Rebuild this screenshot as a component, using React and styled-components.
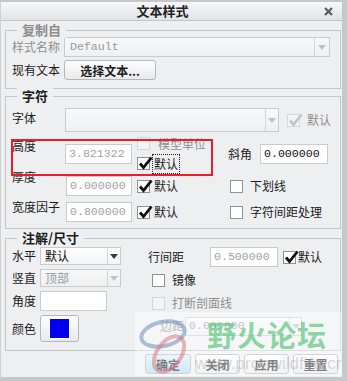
import React from "react";
import styled, { createGlobalStyle } from "styled-components";

const cjk = `"Noto Sans CJK SC", "Noto Sans", sans-serif`;
const mono = `"Liberation Mono", "DejaVu Sans Mono", monospace`;

const GlobalStyle = createGlobalStyle`
  body {
    margin: 0;
    background: #c6c7c9;
  }
  * {
    box-sizing: border-box;
  }
`;

const Window = styled.div`
  position: relative;
  width: 347px;
  height: 381px;
  display: flex;
  flex-direction: column;
  overflow: hidden;
  background: #eeeff1;
  border-top: 2px solid #c6c7c9;
  border-left: 1px solid #cfd0d2;
  border-right: 5px solid #c6c7c9;
  border-bottom: 4px solid #c6c7c9;
  font-family: ${cjk};
  font-size: 12px;
  line-height: 16px;
  color: #1c1c1c;
`;

const TitleBar = styled.div`
  flex: none;
  height: 19px;
  display: flex;
  align-items: center;
  background: linear-gradient(#f7f7f7, #e2e3e5);
  border-bottom: 1px solid #c3c4c6;
`;

const Title = styled.div`
  flex: 1;
  text-align: center;
  font-weight: bold;
  font-size: 13px;
  color: #222;
`;

const CloseBox = styled.div`
  width: 18px;
  display: flex;
  align-items: center;
  justify-content: flex-start;
`;

const Body = styled.div`
  flex: 1;
  display: flex;
  flex-direction: column;
  padding: 9px 1px 0 4px;
`;

const Group = styled.div`
  position: relative;
  border: 1px solid #c4c6c9;
  margin-top: ${(p) => p.$mt || 0}px;
  padding: ${(p) => p.$pad};
  display: flex;
  flex-direction: ${(p) => (p.$row ? "row" : "column")};
  gap: ${(p) => p.$gap || 0}px;
`;

const Legend = styled.span`
  position: absolute;
  top: -9px;
  left: 11px;
  padding: 0 5px;
  background: #eeeff1;
  font-weight: bold;
  font-size: 13px;
  line-height: 16px;
  color: ${(p) => (p.$disabled ? "#8e8e8e" : "#1c1c1c")};
`;

const Row = styled.div`
  display: flex;
  align-items: center;
  height: ${(p) => p.$h || 20}px;
`;

const Col = styled.div`
  display: flex;
  flex-direction: column;
  gap: ${(p) => p.$gap || 0}px;
  width: ${(p) => (p.$w ? `${p.$w}px` : "auto")};
  margin-left: ${(p) => p.$ml || 0}px;
  flex: none;
`;

const Label = styled.span`
  flex: none;
  width: ${(p) => (p.$w ? `${p.$w}px` : "auto")};
  white-space: nowrap;
  align-self: ${(p) => (p.$top ? "flex-start" : "center")};
  margin-top: ${(p) => p.$dy || 0}px;
  margin-left: ${(p) => p.$ml || 0}px;
  color: ${(p) => (p.$disabled ? "#8e8e8e" : "#1c1c1c")};
`;

const TextBox = styled.div`
  flex: none;
  width: ${(p) => p.$w}px;
  height: ${(p) => p.$h || 20}px;
  display: flex;
  align-items: center;
  padding-left: 3px;
  overflow: hidden;
  white-space: nowrap;
  background: ${(p) => (p.$off ? "#f4f5f6" : "#ffffff")};
  border: 1px solid #c9cbcf;
  font-family: ${mono};
  font-size: 11.6px;
  color: ${(p) => (p.$dim ? "#a2a2a2" : "#111")};
`;

const Select = styled.div`
  flex: none;
  width: ${(p) => p.$w}px;
  height: ${(p) => p.$h || 20}px;
  display: flex;
  align-items: stretch;
  border: 1px solid #c9cbcf;
  background: ${(p) =>
    p.$off ? "linear-gradient(#f8f8f9, #eef0f1)" : "linear-gradient(#ffffff, #f3f4f5)"};
  color: ${(p) => (p.$off ? "#9a9a9a" : "#111")};
`;

const SelectText = styled.div`
  flex: 1;
  display: flex;
  align-items: center;
  padding-left: ${(p) => p.$pl || 5}px;
  font-family: ${(p) => (p.$mono ? mono : cjk)};
  font-size: ${(p) => (p.$mono ? "11.6px" : "12px")};
  white-space: nowrap;
  overflow: hidden;
`;

const ArrowCell = styled.div`
  flex: none;
  width: ${(p) => p.$w || 13}px;
  display: flex;
  align-items: center;
  justify-content: center;
  border-left: 1px solid #d3d5d8;
  &::after {
    content: "";
    border-left: 4px solid transparent;
    border-right: 4px solid transparent;
    border-top: 5px solid ${(p) => (p.$off ? "#bfc1c4" : "#3a3a3a")};
  }
`;

const Button = styled.button`
  flex: none;
  width: ${(p) => p.$w}px;
  height: ${(p) => p.$h || 20}px;
  padding: 0;
  display: flex;
  align-items: center;
  justify-content: center;
  border: 1px solid #b3b6ba;
  border-radius: 3px;
  background: ${(p) =>
    p.$primary ? "linear-gradient(#d9effc, #acd8f6)" : "linear-gradient(#fefefe, #e8e9eb)"};
  font-family: ${cjk};
  font-size: 12px;
  font-weight: bold;
  color: #1c1c1c;
`;

const Swatch = styled.span`
  width: 19px;
  height: 19px;
  background: #0000f0;
  outline: 1px solid #ffffff;
`;

const CheckItem = styled.div`
  display: flex;
  align-items: center;
  gap: ${(p) => p.$gap || 4}px;
  margin-left: ${(p) => p.$ml || 0}px;
  color: ${(p) => (p.$disabled ? "#8e8e8e" : "#1c1c1c")};
  white-space: nowrap;
`;

const Box = styled.span`
  position: relative;
  flex: none;
  width: 13px;
  height: 13px;
  border: 1px solid ${(p) => (p.$disabled ? "#d5d7da" : "#8f9194")};
  background: ${(p) => (p.$disabled ? "#f3f4f5" : "#ffffff")};
  svg {
    position: absolute;
    left: 0px;
    top: -3px;
  }
`;

const Focus = styled.span`
  outline: 1px dotted #222;
  padding: 1px 1px;
`;

const Annotation = styled.div`
  position: absolute;
  left: 5px;
  top: 42px;
  width: 202px;
  height: 37px;
  border: 2px solid #ee1c25;
  pointer-events: none;
`;

const ButtonBar = styled.div`
  display: flex;
  justify-content: flex-end;
  gap: 4px;
  margin-top: 3px;
  padding-right: 3px;
`;

const Watermark = styled.div`
  position: absolute;
  left: 134px;
  top: 310px;
  width: 213px;
  height: 64px;
  background: rgba(255, 255, 255, 0.42);
  pointer-events: none;
`;

const MarkLogo = styled.svg`
  position: absolute;
  left: 2px;
  top: 2px;
`;

const MarkTitle = styled.div`
  position: absolute;
  left: 72px;
  top: 5px;
  font-family: ${cjk};
  font-weight: bold;
  font-size: 29px;
  line-height: 34px;
  letter-spacing: 1px;
  color: rgba(70, 190, 110, 0.6);
`;

const MarkUrl = styled.div`
  position: absolute;
  left: 60px;
  top: 42px;
  font-family: "Liberation Sans", Arial, sans-serif;
  font-size: 17px;
  line-height: 20px;
  color: rgba(150, 160, 170, 0.4);
`;

function Check({ disabled, checked }) {
  return (
    <Box $disabled={disabled}>
      {checked && (
        <svg width="15" height="15" viewBox="0 0 15 15">
          <path
            d="M2 8.5 L5.5 12.5 L13.5 2.5"
            fill="none"
            stroke={disabled ? "#c3c5c8" : "#111"}
            strokeWidth="2.8"
            strokeLinejoin="miter"
          />
        </svg>
      )}
    </Box>
  );
}

function CheckBox({ label, checked, disabled, gap, ml, focus }) {
  return (
    <CheckItem $gap={gap} $ml={ml} $disabled={disabled}>
      <Check checked={checked} disabled={disabled} />
      {focus ? <Focus>{label}</Focus> : <span>{label}</span>}
    </CheckItem>
  );
}

function Combo({ w, h, text, off, monoText, arrowW, pl }) {
  return (
    <Select $w={w} $h={h} $off={off}>
      <SelectText $mono={monoText} $pl={pl}>
        {text}
      </SelectText>
      <ArrowCell $off={off} $w={arrowW} />
    </Select>
  );
}

export default function App() {
  return (
    <>
      <GlobalStyle />
      <Window>
        <TitleBar>
          <Title>文本样式</Title>
          <CloseBox>
            <svg width="9" height="9" viewBox="0 0 9 9">
              <path d="M1 1 L8 8 M8 1 L1 8" stroke="#5a5a5a" strokeWidth="2.2" />
            </svg>
          </CloseBox>
        </TitleBar>

        <Body>
          {/* 复制自 */}
          <Group $pad="6px 6px 8px 6px" $gap={3}>
            <Legend $disabled>复制自</Legend>
            <Row>
              <Label $w={52} $disabled>
                样式名称
              </Label>
              <Combo w={266} text="Default" off monoText arrowW={15} pl={5} />
            </Row>
            <Row>
              <Label $w={52}>现有文本</Label>
              <Button $w={92}>选择文本...</Button>
            </Row>
          </Group>

          {/* 字符 */}
          <Group $mt={7} $pad="11px 6px 6px 6px" $gap={6}>
            <Legend>字符</Legend>
            <Row $h={24}>
              <Label $w={53} $top $dy={2}>
                字体
              </Label>
              <Combo w={214} h={24} off />
              <CheckBox label="默认" checked disabled gap={7} ml={8} />
            </Row>
            <Row $h={32}>
              <Label $w={53} $top>
                高度
              </Label>
              <TextBox $w={67} $dim>
                3.821322
              </TextBox>
              <Col $w={91} $gap={3} $ml={5}>
                <CheckBox label="模型单位" disabled gap={8} />
                <CheckBox label="默认" checked gap={3} focus />
              </Col>
              <Label $w={32}>斜角</Label>
              <TextBox $w={68}>0.000000</TextBox>
            </Row>
            <Row>
              <Label $w={54} $top $dy={-7}>
                厚度
              </Label>
              <TextBox $w={66} $dim>
                0.000000
              </TextBox>
              <Col $w={93} $ml={5}>
                <CheckBox label="默认" checked gap={4} />
              </Col>
              <CheckBox label="下划线" gap={7} />
            </Row>
            <Row>
              <Label $w={54} $top $dy={-3}>
                宽度因子
              </Label>
              <TextBox $w={66} $dim>
                0.800000
              </TextBox>
              <Col $w={93} $ml={5}>
                <CheckBox label="默认" checked gap={4} />
              </Col>
              <CheckBox label="字符间距处理" gap={7} />
            </Row>
            <Annotation />
          </Group>

          {/* 注解/尺寸 */}
          <Group $mt={9} $pad="8px 6px 8px 6px" $row>
            <Legend>注解/尺寸</Legend>
            <Col $gap={4} $w={136}>
              <Row $h={18}>
                <Label $w={28}>水平</Label>
                <Combo w={81} h={18} text="默认" arrowW={13} pl={4} />
              </Row>
              <Row $h={18}>
                <Label $w={28}>竖直</Label>
                <Combo w={81} h={18} text="顶部" off arrowW={13} pl={4} />
              </Row>
              <Row>
                <Label $w={28}>角度</Label>
                <TextBox $w={67} />
              </Row>
              <Row $h={27}>
                <Label $w={28}>颜色</Label>
                <Button $w={39} $h={27}>
                  <Swatch />
                </Button>
              </Row>
            </Col>
            <Col $gap={3}>
              <Row>
                <Label $w={62}>行间距</Label>
                <TextBox $w={68} $dim>
                  0.500000
                </TextBox>
                <CheckBox label="默认" checked gap={2} ml={5} />
              </Row>
              <Row>
                <CheckBox label="镜像" gap={7} ml={4} />
              </Row>
              <Row>
                <CheckBox label="打断剖面线" disabled gap={7} ml={4} />
              </Row>
              <Row>
                <Label $w={25} $ml={12} $disabled>
                  边距
                </Label>
                <Combo w={117} h={19} text="0.000000" off monoText arrowW={12} pl={3} />
              </Row>
            </Col>
          </Group>

          <ButtonBar>
            <Button $w={46} $primary>
              确定
            </Button>
            <Button $w={45}>关闭</Button>
            <Button $w={45}>应用</Button>
            <Button $w={45}>重置</Button>
          </ButtonBar>
        </Body>

        <Watermark>
          <MarkLogo width="62" height="62" viewBox="0 0 62 62">
            <ellipse
              cx="26"
              cy="20"
              rx="22"
              ry="12"
              transform="rotate(-12 26 20)"
              fill="none"
              stroke="rgba(110,140,185,0.55)"
              strokeWidth="4"
            />
            <ellipse
              cx="32"
              cy="40"
              rx="12"
              ry="20"
              transform="rotate(35 32 40)"
              fill="none"
              stroke="rgba(220,110,120,0.5)"
              strokeWidth="4"
            />
          </MarkLogo>
          <MarkTitle>野火论坛</MarkTitle>
          <MarkUrl>www.proewildfire.cn</MarkUrl>
        </Watermark>
      </Window>
    </>
  );
}
